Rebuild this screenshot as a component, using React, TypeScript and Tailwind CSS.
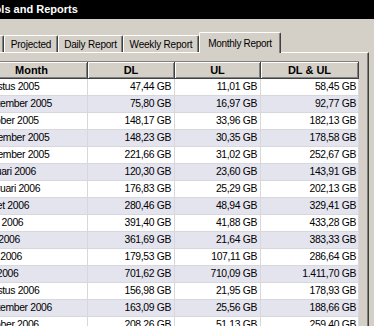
const rows: [string, string, string, string][] = [
  ["Agustus 2005", "47,44 GB", "11,01 GB", "58,45 GB"],
  ["September 2005", "75,80 GB", "16,97 GB", "92,77 GB"],
  ["Oktober 2005", "148,17 GB", "33,96 GB", "182,13 GB"],
  ["November 2005", "148,23 GB", "30,35 GB", "178,58 GB"],
  ["Desember 2005", "221,66 GB", "31,02 GB", "252,67 GB"],
  ["Januari 2006", "120,30 GB", "23,60 GB", "143,91 GB"],
  ["Februari 2006", "176,83 GB", "25,29 GB", "202,13 GB"],
  ["Maret 2006", "280,46 GB", "48,94 GB", "329,41 GB"],
  ["April 2006", "391,40 GB", "41,88 GB", "433,28 GB"],
  ["Mei 2006", "361,69 GB", "21,64 GB", "383,33 GB"],
  ["Juni 2006", "179,53 GB", "107,11 GB", "286,64 GB"],
  ["Juli 2006", "701,62 GB", "710,09 GB", "1.411,70 GB"],
  ["Agustus 2006", "156,98 GB", "21,95 GB", "178,93 GB"],
  ["September 2006", "163,09 GB", "25,56 GB", "188,66 GB"],
  ["Oktober 2006", "208,26 GB", "51,13 GB", "259,40 GB"],
];

const tabBase =
  "h-[17px] flex items-center justify-center shrink-0 border-l border-t border-r border-l-white border-t-white border-r-[#404040] rounded-t-[2px] shadow-[inset_-1px_0_0_#808080] text-[10px] tracking-[-0.2px] whitespace-nowrap";

const headCell =
  "h-[17px] flex items-center justify-center text-[11px] font-bold border-r border-b border-[#404040] shadow-[inset_1px_1px_0_#fff,inset_-1px_-1px_0_#808080] whitespace-nowrap overflow-hidden";

const bodyCell =
  "h-[17px] border-r border-b border-[#d8d8dc] whitespace-nowrap overflow-hidden";

export default function App() {
  return (
    <div className="w-[374px] h-[326px] overflow-hidden bg-[#d4d0c8] text-black font-['Liberation_Sans',Arial,sans-serif] flex flex-col">
      {/* title bar */}
      <div className="h-[19px] shrink-0 bg-black overflow-hidden whitespace-nowrap">
        <span className="block ml-[-18px] text-[11px] font-bold leading-[19px] text-white">
          Tools and Reports
        </span>
      </div>

      {/* tabs */}
      <div className="relative z-10 mt-[13px] ml-[-40px] h-[20px] shrink-0 flex items-end">
        <div className={`${tabBase} w-[44px]`} />
        <div className={`${tabBase} w-[54px]`}>Projected</div>
        <div className={`${tabBase} w-[65px]`}>Daily Report</div>
        <div className={`${tabBase} w-[76px]`}>Weekly Report</div>
        <div className="h-[21px] mb-[-1px] w-[82px] shrink-0 bg-[#d4d0c8] flex justify-center pt-[3px] border-l border-t border-r border-l-white border-t-white border-r-[#404040] rounded-t-[2px] shadow-[inset_-1px_0_0_#808080] text-[10px] tracking-[-0.3px] whitespace-nowrap">
          Monthly Report
        </div>
      </div>

      {/* panel */}
      <div className="flex-1 ml-[-40px] w-[409px] border-t border-r border-t-white border-r-[#404040] shadow-[inset_-1px_0_0_#808080] pt-[8px] overflow-hidden">
        <div className="ml-[16px] w-[383px] border-t border-[#808080]">
          <div className="grid grid-cols-[112px_87px_86px_98px]">
            <div className={headCell}>Month</div>
            <div className={headCell}>DL</div>
            <div className={headCell}>UL</div>
            <div className={headCell}>DL &amp; UL</div>
          </div>
          {rows.map((r, i) => (
            <div
              key={i}
              className={`grid grid-cols-[112px_87px_86px_98px] text-[10.4px] tracking-[-0.35px] leading-[15px] ${
                i % 2 === 1 ? "bg-[#e4e4ef]" : "bg-white"
              }`}
            >
              <div className={`${bodyCell} pl-[4px]`}>{r[0]}</div>
              <div className={`${bodyCell} pr-[3px] text-right`}>{r[1]}</div>
              <div className={`${bodyCell} pr-[3px] text-right`}>{r[2]}</div>
              <div className={`${bodyCell} pr-[2px] text-right`}>{r[3]}</div>
            </div>
          ))}
        </div>
      </div>
    </div>
  );
}
